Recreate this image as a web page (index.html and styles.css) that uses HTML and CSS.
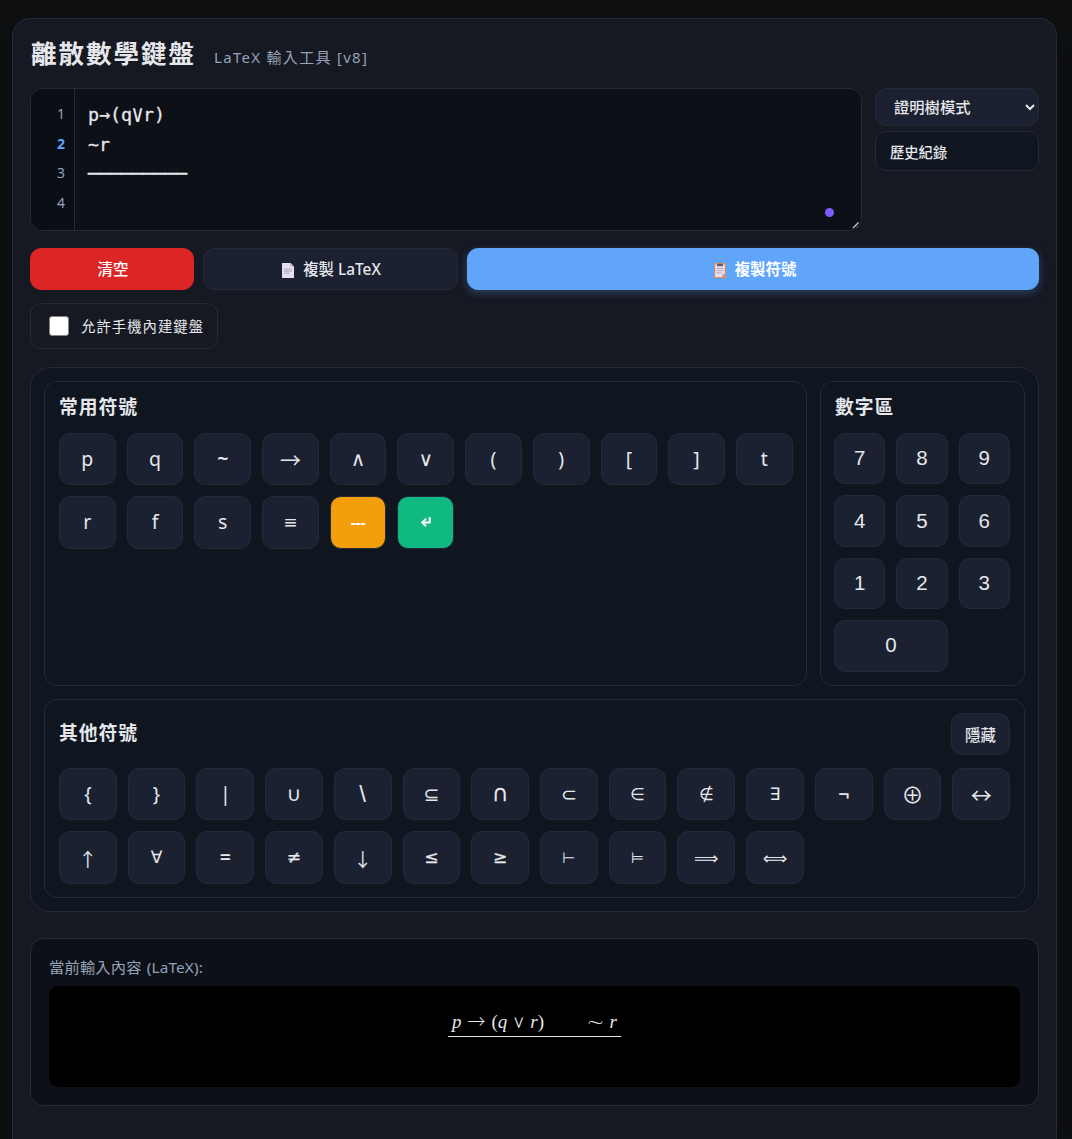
FILE: index.html
```html
<!DOCTYPE html>
<html lang="zh-Hant">
<head>
<meta charset="utf-8">
<title>離散數學鍵盤</title>
<link rel="stylesheet" href="styles.css">
</head>
<body>
<main class="app">
  <header class="header">
    <h1>離散數學鍵盤</h1>
    <span class="subtitle">LaTeX 輸入工具 [v8]</span>
  </header>

  <section class="top">
    <div class="editor">
      <div class="gutter"><span>1</span><span class="active">2</span><span>3</span><span>4</span></div>
      <div class="code"><div>p→(q<span class="wide-or">∨</span>r)</div><div>~r</div><div class="code-rule">─────────</div></div>
      <i class="dot"></i>
      <svg class="grip" width="8" height="8" viewBox="0 0 8 8"><path d="M1 7 6.5 1.5M4.5 7 6.5 5" stroke="#c9c9c9" stroke-width="1.3"/></svg>
    </div>
    <div class="side">
      <select class="mode"><option>證明樹模式</option></select>
      <div class="history">歷史紀錄</div>
    </div>
  </section>

  <section class="actions">
    <button class="btn danger">清空</button>
    <button class="btn">
      <svg width="12" height="15" viewBox="0 0 12 15"><path d="M0 0H8.5L12 3.5V15H0Z" fill="#e7deee"/><path d="M8.5 0V3.5H12Z" fill="#b9acc5"/><path d="M2 6.2H10M2 8.2H10M2 10.2H7.5" stroke="#aaa0b5" stroke-width=".9"/></svg>
      複製 LaTeX</button>
    <button class="btn primary">
      <svg width="12" height="15" viewBox="0 0 12 15"><rect width="12" height="15" rx=".8" fill="#d48d68"/><path d="M1.2 1.5H10.8V11L8 14H1.2Z" fill="#eae1ef"/><path d="M8 14V11H10.8Z" fill="#b9acc5"/><path d="M3 1H4.7Q6-.4 7.3 1H9V3.2H3Z" fill="#665d6c"/><path d="M2.5 5.5H9.5M2.5 7.7H9.5M2.5 9.9H7.5" stroke="#aaa0b5" stroke-width=".9"/></svg>
      複製符號</button>
  </section>

  <label class="toggle"><input type="checkbox"><span>允許手機內建鍵盤</span></label>

  <section class="keyboard">
    <div class="panel common">
      <h2>常用符號</h2>
      <div class="keys">
        <button>p</button><button>q</button><button class="bold">~</button><button class="sym arrow">→</button><button class="sym logic">∧</button><button class="sym logic">∨</button><button>(</button><button>)</button><button>[</button><button>]</button><button>t</button>
        <button>r</button><button>f</button><button>s</button><button class="sym">≡</button><button class="line">---</button><button class="enter"><svg width="12" height="12" viewBox="0 0 12 12"><path d="M9.7 1V6.5H3.5" fill="none" stroke="#fff" stroke-width="2"/><path d="M6 2.8 2.3 6.5 6 10.2" fill="none" stroke="#fff" stroke-width="2"/></svg></button>
      </div>
    </div>
    <div class="panel numbers">
      <h2>數字區</h2>
      <div class="keys">
        <button>7</button><button>8</button><button>9</button><button>4</button><button>5</button><button>6</button><button>1</button><button>2</button><button>3</button><button class="zero">0</button>
      </div>
    </div>
    <div class="panel others">
      <div class="panel-head"><h2>其他符號</h2><button class="hide">隱藏</button></div>
      <div class="keys">
        <button>{</button><button>}</button><button>|</button><button class="sym logic">∪</button><button class="backslash">\</button><button class="sym set">⊆</button><button class="sym cap">∩</button><button class="sym set">⊂</button><button class="sym">∈</button><button class="sym">∉</button><button class="sym">∃</button><button class="bold">¬</button><button class="sym oplus">⊕</button><button class="sym arrow">↔</button>
        <button class="sym arrow vertical">↑</button><button class="sym">∀</button><button class="bold">=</button><button class="sym compare">≠</button><button class="sym arrow vertical">↓</button><button class="sym compare">≤</button><button class="sym compare">≥</button><button class="sym turnstile">⊢</button><button class="sym turnstile">⊨</button><button class="sym implies">⟹</button><button class="sym implies">⟺</button>
      </div>
    </div>
  </section>

  <section class="preview">
    <div class="preview-title">當前輸入內容 (LaTeX):</div>
    <div class="preview-box">
      <div class="math"><span><i>p</i><span class="rel">→</span>(<i>q</i><span class="vee">∨</span><i>r</i>)</span><span><span class="sim">∼</span><i>r</i></span></div>
    </div>
  </section>
</main>
</body>
</html>
```
FILE: styles.css
```css
* { box-sizing: border-box; }
body {
  margin: 0;
  height: 1139px;
  overflow: hidden;
  padding: 18px 15px 0 12px;
  background: #0f1012;
  color: #e5e7eb;
  font: 15px/1.5 "Noto Sans", "Noto Sans CJK TC", sans-serif;
}
button, select { font: inherit; color: inherit; }
h1, h2 { margin: 0; font-family: "Noto Sans CJK TC", sans-serif; font-weight: 700; }
.app {
  height: 1121px;
  padding: 0 17px;
  border: 1px solid #232a38;
  border-bottom: 0;
  border-radius: 18px 18px 0 0;
  background: #161822;
  box-shadow: 0 10px 30px rgba(0, 0, 0, .4);
}
.header { display: flex; align-items: baseline; gap: 18px; height: 69px; padding: 13px 0 0 1px; }
h1 { font-size: 25.5px; line-height: 39px; letter-spacing: 2px; }
.subtitle { color: #94a3b8; letter-spacing: 1.3px; font-size: 15px; }

.top { display: flex; gap: 13px; }
.editor {
  position: relative;
  display: flex;
  flex: 1;
  height: 143px;
  border: 1px solid #232a38;
  border-radius: 13px;
  background: #0d1017;
  overflow: hidden;
}
.gutter {
  width: 44px;
  padding: 10px 9px 0 0;
  border-right: 1px solid #232a38;
  background: #0b0e14;
  color: #94a3b8;
  font-size: 14px;
  line-height: 29.6px;
  text-align: right;
}
.gutter span { display: block; }
.gutter .active { color: #60a5fa; font-weight: 700; }
.code {
  padding: 11px 13px;
  font: 18.3px/29.5px "DejaVu Sans Mono", monospace;
  -webkit-text-stroke: .3px currentColor;
}
.wide-or { display: inline-block; transform: scale(1.15, 1.3) translateY(-1px); -webkit-text-stroke: 0; }
.code-rule { -webkit-text-stroke: .4px currentColor; }
.dot { position: absolute; left: 794px; top: 119px; width: 9px; height: 9px; border-radius: 50%; background: #8058ff; }
.grip { position: absolute; right: 1px; bottom: 1px; }
.side { width: 164px; display: flex; flex-direction: column; gap: 5px; }
.mode {
  height: 38px;
  padding: 0 2px 0 14px;
  border: 1px solid #232a38;
  border-radius: 11px;
  background: #1b2130;
  font-size: 15.3px;
  font-weight: 500;
}
.history {
  height: 40px;
  padding: 0 14px;
  border: 1px solid #232a38;
  border-radius: 11px;
  background: #0f1620;
  font-size: 14.3px;
  font-weight: 500;
  line-height: 42px;
}

.actions { display: grid; grid-template-columns: 164px 255px 1fr; gap: 9px; margin-top: 17px; }
.btn {
  display: flex;
  align-items: center;
  justify-content: center;
  gap: 9px;
  height: 42px;
  padding: 2px 0 0 2px;
  border: 1px solid #232a38;
  border-radius: 11px;
  background: #1b2130;
  font-size: 15.4px;
  font-weight: 500;
}
.danger { border-color: #dc2626; background: #dc2626; color: #fff; }
.primary { padding-left: 4px; border-color: #60a5fa; background: #60a5fa; color: #fff; font-weight: 700; box-shadow: 0 3px 10px rgba(96, 165, 250, .3); }

.toggle {
  display: flex;
  align-items: center;
  gap: 12px;
  width: 188px;
  height: 46px;
  margin-top: 13px;
  padding-left: 18px;
  border: 1px solid #232a38;
  border-radius: 11px;
  font-size: 14.4px;
  letter-spacing: 1px;
  white-space: nowrap;
}
.toggle span { padding-top: 1px; }
.toggle input { appearance: none; width: 20px; height: 20px; margin: 0; border: 1px solid #858585; border-radius: 3px; background: #fff; }

.keyboard {
  display: grid;
  grid-template-columns: 763px 205px;
  grid-template-rows: 305px 199px;
  gap: 13px;
  height: 545px;
  margin-top: 18px;
  padding: 13px;
  border: 1px solid #232a38;
  border-radius: 20px;
  background: #0f1620;
}
.panel { padding: 13px 14px; border: 1px solid #232a38; border-radius: 13px; }
.common { padding-right: 13.4px; }
.numbers { padding-left: 13px; }
.others { grid-column: 1 / 3; }
h2 { height: 38px; font-size: 18.8px; line-height: 22px; letter-spacing: 1px; }
.numbers h2 { padding-left: 1px; }
.keys { display: grid; gap: 11px; }
.common .keys { grid-template-columns: repeat(11, 1fr); grid-auto-rows: 52.3px; }
.numbers .keys { grid-template-columns: repeat(3, 1fr); grid-auto-rows: 51.4px; }
.others .keys { grid-template-columns: repeat(14, 1fr); grid-auto-rows: 52.3px; }
.keys button {
  display: flex;
  align-items: center;
  justify-content: center;
  padding: 0;
  border: 1px solid #232a38;
  border-radius: 11px;
  background: #1b2130;
  font-size: 19.5px;
  line-height: 24px;
}
.keys .bold { font-weight: 600; }
.keys .backslash { font-family: "Liberation Sans", sans-serif; font-size: 24px; }
.numbers .keys button { padding-bottom: 1px; font-family: "Liberation Sans", sans-serif; font-size: 20.5px; }
.numbers .zero { grid-column: span 2; }
.keys .sym { font-family: "DejaVu Sans", sans-serif; font-size: 17px; }
.keys .logic { font-size: 20px; }
.keys .set { font-size: 19px; }
.keys .cap { font-size: 23px; padding-bottom: 2px; }
.keys .arrow { font-family: "Noto Sans CJK TC", sans-serif; font-size: 21px; }
.keys .vertical { font-size: 19px; padding-top: 3px; }
.keys .oplus { font-family: "Noto Sans CJK TC", sans-serif; font-size: 22px; padding-bottom: 2px; }
.keys .compare { -webkit-text-stroke: .3px currentColor; }
.keys .turnstile { font-size: 15px; padding-top: 2px; }
.keys .implies { font-size: 17px; padding-top: 2px; }
.keys .line { background: #f59e0b; color: #fff; font-size: 15.5px; font-weight: 700; }
.keys .enter { background: #10b981; }
.panel-head { display: flex; justify-content: space-between; height: 55px; }
.panel-head h2 { padding-top: 8px; }
.hide { width: 59px; height: 42px; padding: 3px 0 0; border: 1px solid #232a38; border-radius: 11px; background: #1b2130; font-size: 15.4px; font-weight: 500; }

.preview {
  height: 168px;
  margin-top: 26px;
  padding: 17px 18px 0;
  border: 1px solid #232a38;
  border-radius: 13px;
  background: #0d1017;
}
.preview-title { height: 30px; color: #94a3b8; font-size: 15.3px; line-height: 22px; word-spacing: 1px; letter-spacing: .15px; }
.preview-box { display: flex; justify-content: center; height: 101px; padding-top: 23px; border-radius: 9px; background: #000; }
.math {
  display: flex;
  justify-content: space-between;
  width: 173px;
  height: 28px;
  padding: 0 4px;
  border-bottom: 1.5px solid #e5e7eb;
  font: 19px/25px "Liberation Serif", serif;
  white-space: nowrap;
}
.math .rel { display: inline-block; margin: 0 6px; font: 300 18px/20px "Noto Sans CJK TC", sans-serif; }
.math .vee { display: inline-block; margin: 0 4px; font: 300 18px/20px "DejaVu Sans", sans-serif; transform: scaleX(.9); }
.math .sim { display: inline-block; margin-right: 7px; transform: scaleX(1.25); }
```
